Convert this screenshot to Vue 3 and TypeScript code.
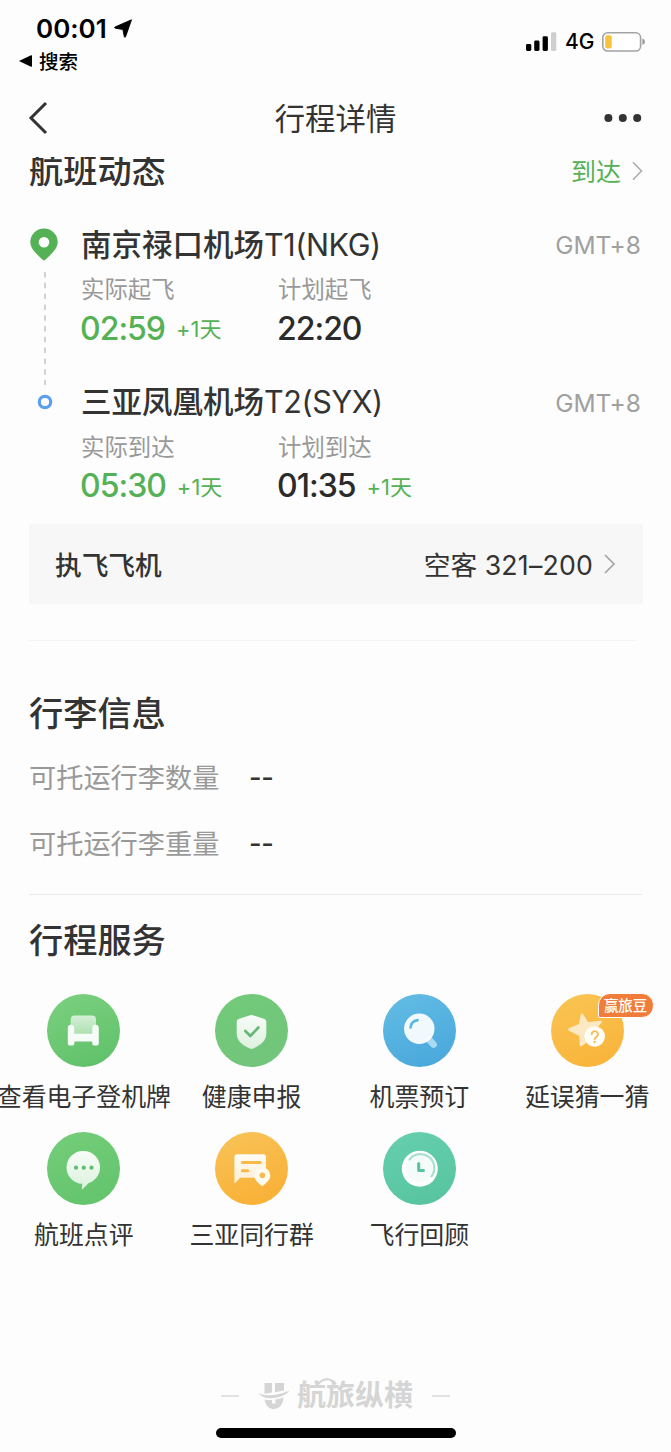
<script setup lang="ts">
interface Stop {
  name: string
  code: string
  actualLabel: string
  actual: string
  actualDay: string
  planLabel: string
  plan: string
  planDay: string
}

interface Service {
  icon: string
  label: string
  from: string
  to: string
  badge?: string
}

const stops: Stop[] = [
  { name: '南京禄口机场', code: 'T1(NKG)', actualLabel: '实际起飞', actual: '02:59', actualDay: '+1天', planLabel: '计划起飞', plan: '22:20', planDay: '' },
  { name: '三亚凤凰机场', code: 'T2(SYX)', actualLabel: '实际到达', actual: '05:30', actualDay: '+1天', planLabel: '计划到达', plan: '01:35', planDay: '+1天' },
]

const luggage: string[] = ['可托运行李数量', '可托运行李重量']

const services: Service[] = [
  { icon: 'seat', label: '查看电子登机牌', from: '#7bd07f', to: '#62c26b' },
  { icon: 'shield', label: '健康申报', from: '#72ca79', to: '#72c57b' },
  { icon: 'search', label: '机票预订', from: '#62bce4', to: '#4ba9dc' },
  { icon: 'star', label: '延误猜一猜', from: '#f9c552', to: '#f9b53c', badge: '赢旅豆' },
  { icon: 'chat', label: '航班点评', from: '#74cd7a', to: '#64c56d' },
  { icon: 'group', label: '三亚同行群', from: '#f8c358', to: '#f9b137' },
  { icon: 'clock', label: '飞行回顾', from: '#66cfae', to: '#58c5a0' },
]
</script>

<template>
  <div class="page">
    <header class="status">
      <div class="status-left">
        <div class="clock-row">
          <span class="time">00:01</span>
          <svg class="loc" width="19" height="19" viewBox="0 0 19 19"><path d="M17.500.8 1 8q-1 .8.300 1.200l7.600 1.300 1.400 7.200q.5 1.400 1.300 0z" fill="#000" stroke="#000" stroke-width=".9" stroke-linejoin="round" /></svg>
        </div>
        <div class="back-app">
          <svg width="13" height="12" viewBox="0 0 13 12"><path d="M0 6 12 .3Q13 0 13 1v10q0 1-1 .7z" fill="#000" /></svg>
          <span>搜索</span>
        </div>
      </div>
      <div class="status-right">
        <svg width="31" height="20" viewBox="0 0 31 20">
          <rect x="0" y="12" width="5.300" height="7" rx="1.400" />
          <rect x="8.200" y="8.500" width="5.300" height="10.500" rx="1.400" />
          <rect x="16.600" y="4.300" width="5.300" height="14.700" rx="1.400" />
          <rect x="25" y="0.300" width="5.300" height="18.700" rx="1.400" fill="#cfcfcf" />
        </svg>
        <span class="net">4G</span>
        <svg width="44" height="20" viewBox="0 0 44 20">
          <rect x=".8" y=".8" width="37.800" height="18.200" rx="4.800" fill="#fff" stroke="#a3a3a3" stroke-width="1.600" />
          <rect x="3.200" y="3.300" width="6.500" height="13.200" rx="2" fill="#f5c43c" />
          <path d="M40.400 6.500q2.600 1 2.600 3.300t-2.600 3.300z" fill="#999" />
        </svg>
      </div>
    </header>

    <nav class="nav">
      <svg width="20" height="34" viewBox="0 0 20 34"><path d="M18 2 3 17l15 15" fill="none" stroke="#333" stroke-width="3" /></svg>
      <h1>行程详情</h1>
      <svg width="38" height="10" viewBox="0 0 38 10" fill="#333"><circle cx="4.400" cy="5" r="4" /><circle cx="18.800" cy="5" r="4" /><circle cx="33.200" cy="5" r="4" /></svg>
    </nav>

    <section class="flight">
      <div class="flight-head">
        <h2>航班动态</h2>
        <div class="state">
          <span>到达</span>
          <svg width="11" height="20" viewBox="0 0 11 20"><path d="M1 1.200 9.500 10 1 18.800" fill="none" stroke="#aaa" stroke-width="1.500" /></svg>
        </div>
      </div>

      <div class="route">
        <div class="track">
          <svg class="pin" width="28" height="33" viewBox="0 0 28 33"><path d="M14 .5a13.600 13.600 0 0 1 13.700 13.600c0 7-7 12.500-12.400 17.700q-1.300 1.200-2.600 0C7.300 26.600.3 21.100.3 14.100A13.600 13.600 0 0 1 14 .5z" fill="#55b155" /><circle cx="14" cy="14.300" r="5.300" fill="#fff" /></svg>
          <svg class="dash" width="2" height="113" viewBox="0 0 2 113"><path d="M1 0v113" stroke="#cbcbcb" stroke-width="1.700" stroke-dasharray="5.500 5.300" /></svg>
          <svg class="ring" width="16" height="16" viewBox="0 0 16 16"><circle cx="8" cy="8" r="5.700" fill="#fff" stroke="#5b9ff0" stroke-width="3.200" /></svg>
        </div>
        <div class="stops">
          <div v-for="stop in stops" :key="stop.code" class="stop">
            <div class="airport">
              <span class="name">{{ stop.name }}<span class="code">{{ stop.code }}</span></span>
              <span class="zone">GMT+8</span>
            </div>
            <div class="times">
              <div class="col">
                <div class="label">{{ stop.actualLabel }}</div>
                <div class="value green"><b>{{ stop.actual }}</b><i>{{ stop.actualDay }}</i></div>
              </div>
              <div class="col">
                <div class="label">{{ stop.planLabel }}</div>
                <div class="value"><b>{{ stop.plan }}</b><i v-if="stop.planDay">{{ stop.planDay }}</i></div>
              </div>
            </div>
          </div>
        </div>
      </div>

      <div class="plane">
        <span class="plane-key">执飞飞机</span>
        <span class="plane-val">空客 <span class="model">321–200</span></span>
        <svg width="12" height="20" viewBox="0 0 12 20"><path d="M1 1 10 10l-9 9" fill="none" stroke="#a5a5a5" stroke-width="1.700" /></svg>
      </div>
      <div class="divider"></div>
    </section>

    <section class="luggage">
      <h2>行李信息</h2>
      <div v-for="row in luggage" :key="row" class="bag-row">
        <span class="bag-key">{{ row }}</span>
        <span class="bag-val">--</span>
      </div>
    </section>

    <section class="services">
      <h2>行程服务</h2>
      <div class="grid">
        <div v-for="s in services" :key="s.icon" class="service">
          <div class="disc">
            <svg width="73" height="73" viewBox="0 0 73 73">
              <defs>
                <linearGradient :id="'bg-' + s.icon" x1="0.1" y1="0" x2="0.5" y2="1">
                  <stop offset="0" :stop-color="s.from" />
                  <stop offset="1" :stop-color="s.to" />
                </linearGradient>
                <linearGradient :id="'fg-' + s.icon" x1="0" y1="0" x2="0" y2="1">
                  <stop offset="0" stop-color="#fff" :stop-opacity="s.icon === 'seat' ? 0.7 : 0.95" />
                  <stop offset="1" stop-color="#fff" :stop-opacity="s.icon === 'seat' ? 0.45 : 0.76" />
                </linearGradient>
              </defs>
              <circle cx="36.500" cy="36.500" r="36.500" :fill="`url(#bg-${s.icon})`" />

              <g v-if="s.icon === 'seat'">
                <path d="M27.500 21.500h17.800q3.700 0 3.700 3.700V31q-3 .5-3 4v5H27v-5q0-3.500-3.300-4v-5.800q0-3.700 3.800-3.700z" fill="url(#fg-seat)" />
                <path d="M24 30.800q3.200 0 3.200 3.400v5.600h18.200v-5.600q0-3.400 3.200-3.400t3.200 3.400v15.300q0 2-2 2h-2.600q-2 0-2-2v-2H27.400v2q0 2-2 2h-2.600q-2 0-2-2V34.200q0-3.400 3.200-3.400z" fill="#fff" fill-opacity=".94" />
              </g>

              <g v-else-if="s.icon === 'shield'">
                <path d="M35.100 21.200q1.400-.7 2.800 0L49.500 25q1.800.6 1.800 2.500v12c0 8-6.500 11.800-13 14.900q-1.800.8-3.600 0c-6.500-3.100-13-6.900-13-14.900v-12q0-1.900 1.800-2.500z" fill="url(#fg-shield)" />
                <path d="m30.300 37 5 5L43.400 33.500" fill="none" stroke="#65b873" stroke-width="2.600" stroke-linecap="round" stroke-linejoin="round" />
              </g>

              <g v-else-if="s.icon === 'search'">
                <path d="M46 45.500 50.500 50.500" stroke="#a9d9f3" stroke-width="6.800" stroke-linecap="round" />
                <circle cx="36.300" cy="34.800" r="15.200" fill="#fff" fill-opacity=".92" />
                <path d="M27.600 33.500q.4-6.500 7-7.400" fill="none" stroke="#5bb7e3" stroke-width="2.600" stroke-linecap="round" />
              </g>

              <g v-else-if="s.icon === 'star'">
                <path d="M31 21l5.500 8.500 13-1.500-8 9.500 3.500 11-8.500-2-6.500 4.500-.5-10-11-5.500 10.500-4.500z" fill="#fde8c4" stroke="#fde8c4" stroke-width="2.600" stroke-linejoin="round" />
                <circle cx="43.700" cy="42.500" r="10.300" fill="#fffdf8" />
                <path d="M40.700 40.300a3.100 3.100 0 1 1 4.700 2.600q-1.700 1-1.700 2.200" fill="none" stroke="#f4bd59" stroke-width="1.900" stroke-linecap="round" />
                <circle cx="43.700" cy="48" r="1.200" fill="#f4bd59" />
              </g>

              <g v-else-if="s.icon === 'chat'">
                <path d="M36.700 19a16.400 16.400 0 0 1 5 32q-2 2-6 6-.8.600-.8-.5l.3-4.700A16.400 16.400 0 0 1 36.700 19z" fill="url(#fg-chat)" />
                <g fill="#63bd70"><circle cx="29" cy="35.700" r="2.100" /><circle cx="36.800" cy="35.700" r="2.100" /><circle cx="44.500" cy="35.700" r="2.100" /></g>
              </g>

              <g v-else-if="s.icon === 'group'">
                <path d="M22 22.300h26q3 0 3 3v20.500H25.200l-4.800 5q-1 1-1-.5v-25q0-3 2.600-3z" fill="url(#fg-group)" />
                <path d="M27.300 30.400h18M27.300 38.700h5.500" stroke="#f7ba4b" stroke-width="3" stroke-linecap="round" />
                <path d="M47.300 35.500a8 8 0 0 1 8 8c0 4.200-3.800 7-6.700 9.700q-1.300 1.100-2.600 0c-2.900-2.700-6.700-5.500-6.700-9.700a8 8 0 0 1 8-8z" fill="#fffaf0" />
                <circle cx="47.300" cy="43.300" r="2.800" fill="#f7ba4b" />
              </g>

              <g v-else>
                <circle cx="36.800" cy="36.700" r="18" fill="#fff" />
                <circle cx="36.800" cy="36.700" r="13.800" fill="#f4fbf9" />
                <path d="M26.500 27.500a13.800 13.800 0 0 1 22 16.800" fill="none" stroke="#a9e0cf" stroke-width="2.200" stroke-linecap="round" />
                <path d="M35.700 31.500v7h4.800" fill="none" stroke="#57c3a0" stroke-width="3" stroke-linecap="round" stroke-linejoin="round" />
              </g>
            </svg>
            <span v-if="s.badge" class="badge">{{ s.badge }}</span>
          </div>
          <div class="service-label">{{ s.label }}</div>
        </div>
      </div>
    </section>

    <footer class="footer">
      <div class="brand">
        <span class="rule"></span>
        <svg class="mark" width="34" height="28" viewBox="0 0 34 28" fill="#d5d5d5">
          <path d="M7.500 1H15v9.500l-7.500 1.200zM18 1h9v7.500L18 10.200z" />
          <path d="M.5 8.500Q1 12 7 13q12 1.500 25.500-4.500Q29 14.500 17 16 3 17.500.5 8.500z" />
          <path d="M7.500 17.500q4 .8 7.500.5v3q1.500 1.500 3.500.3V17.500q4.500-.6 8-2.300-.5 11.300-10 12-8-.7-9-9.700z" />
        </svg>
        <span class="brand-name">航旅纵横
          <svg class="arc" width="20" height="7" viewBox="0 0 20 7"><path d="M1 6Q10-3.500 19 6" fill="none" stroke="#d5d5d5" stroke-width="2" /></svg>
        </span>
        <span class="rule"></span>
      </div>
      <div class="home"></div>
    </footer>
  </div>
</template>

<style>
body {
  background: #fdfdfd;
}
</style>

<style scoped>
.page {
  width: 671px;
  height: 1452px;
  overflow: hidden;
  background: #fdfdfd;
  color: #333;
  font-family: Inter, "Noto Sans CJK SC", sans-serif;
  font-feature-settings: "calt" 0;
}
.page * {
  box-sizing: border-box;
}
svg {
  display: block;
  flex: none;
}
h1,
h2 {
  margin: 0;
}
.status {
  height: 84px;
  display: flex;
  justify-content: space-between;
  color: #000;
}
.status-left {
  padding: 13px 0 0 19px;
}
.clock-row {
  display: flex;
  align-items: center;
  height: 30px;
  padding-left: 17px;
}
.time {
  width: 78px;
  font-size: 26px;
  font-weight: 600;
  line-height: 30px;
  padding-top: 1px;
}
.back-app {
  display: flex;
  align-items: center;
  gap: 7px;
  height: 35px;
  font-size: 19.500px;
  font-weight: 500;
}
.status-right {
  display: flex;
  align-items: center;
  height: 20px;
  margin: 32px 25px 0 0;
}
.net {
  width: 45px;
  padding-left: 8px;
  font-size: 21px;
  font-weight: 500;
  line-height: 20px;
}
.nav {
  display: flex;
  align-items: center;
  justify-content: space-between;
  height: 73px;
  padding: 0 29px 5px 28px;
}
.nav h1 {
  font-size: 30.400px;
  font-weight: 400;
  line-height: 40px;
  padding: 2px 0 0;
  margin-right: -19px;
}
h2 {
  font-size: 34.200px;
  font-weight: 500;
  line-height: 50px;
}
.flight {
  height: 484px;
  padding: 0 28px 0 29px;
}
.flight-head {
  display: flex;
  align-items: flex-start;
  justify-content: space-between;
  height: 29px;
}
.flight-head h2 {
  height: 30px;
  line-height: 27px;
  overflow: hidden;
}
.state {
  display: flex;
  align-items: center;
  gap: 11px;
  height: 27px;
  color: #55b155;
  font-size: 25px;
}
.state span {
  padding-bottom: 2px;
}
.route {
  display: flex;
  padding-top: 39px;
}
.track {
  width: 52px;
  padding: 3px 0 0 1px;
}
.dash {
  margin: 11px 0 0 14px;
}
.ring {
  margin: 9px 0 0 7px;
}
.stops {
  flex: 1;
}
.stop {
  height: 157.500px;
}
.airport {
  display: flex;
  align-items: center;
  justify-content: space-between;
  height: 40px;
}
.name {
  padding-bottom: 5px;
  font-size: 30.500px;
  font-weight: 500;
  white-space: nowrap;
}
.code {
  font-weight: 400;
  letter-spacing: -0.400px;
}
.zone {
  padding-right: 2px;
  color: #a0a0a0;
  font-size: 24.500px;
}
.times {
  display: flex;
}
.col {
  width: 197px;
}
.label {
  height: 50px;
  color: #999;
  font-size: 23.400px;
  line-height: 50px;
}
.value {
  display: flex;
  align-items: center;
  gap: 11px;
  height: 26px;
  color: #2b2b2b;
  white-space: nowrap;
}
.value b {
  margin-left: -1px;
  font-size: 32px;
  font-weight: 500;
  letter-spacing: -1px;
}
.value i {
  color: #55b155;
  font-size: 22px;
  font-style: normal;
  padding-bottom: 2px;
}
.value.green b {
  color: #55b155;
}
.plane {
  display: flex;
  align-items: center;
  width: 614px;
  height: 80px;
  margin-top: -16px;
  padding: 0 27px 0 26px;
  border-radius: 3px;
  background: #f7f7f7;
  font-size: 26.700px;
}
.plane-key {
  padding-bottom: 2px;
  font-weight: 500;
}
.plane-val {
  margin: 0 11px 0 auto;
  padding-bottom: 2px;
}
.model {
  letter-spacing: 0.200px;
}
.divider {
  width: 607px;
  height: 1px;
  margin-top: 36px;
  background: #f4f4f4;
}
.luggage {
  margin: 0 29px;
  height: 254px;
  padding-top: 48px;
  border-bottom: 1px solid #ebebeb;
}
.luggage h2 {
  margin-bottom: 4px;
}
.bag-row {
  display: flex;
  align-items: center;
  height: 66px;
  font-size: 27.200px;
}
.bag-key {
  width: 220px;
  color: #999;
}
.bag-val {
  padding-top: 2px;
  font-weight: 500;
  letter-spacing: -0.300px;
}
.services h2 {
  margin: 21px 0 28px 29px;
}
.grid {
  display: grid;
  grid-template-columns: repeat(4, 167.750px);
}
.service {
  display: flex;
  flex-direction: column;
  align-items: center;
  height: 138px;
}
.disc {
  position: relative;
  height: 73px;
}
.badge {
  position: absolute;
  left: 47px;
  top: -1px;
  width: 56px;
  height: 25px;
  border: 1.500px solid #fff;
  border-radius: 12px 12px 12px 2px;
  background: #f07e3a;
  color: #fff;
  font-size: 14.500px;
  font-weight: 500;
  line-height: 24px;
  text-align: center;
  white-space: nowrap;
}
.service-label {
  margin-top: 11px;
  font-size: 24.900px;
  line-height: 38px;
  white-space: nowrap;
}
.footer {
  padding-top: 108px;
}
.brand {
  display: flex;
  align-items: center;
  height: 36px;
  padding-left: 221px;
}
.rule {
  width: 18px;
  height: 2px;
  background: #e2e2e2;
}
.mark {
  margin: 0 6px 0 18px;
}
.brand-name {
  position: relative;
  width: 117px;
  margin-right: 18px;
  color: #d5d5d5;
  font-size: 29px;
  font-weight: 700;
  line-height: 36px;
  white-space: nowrap;
}
.arc {
  position: absolute;
  left: 20px;
  top: 0;
}
.home {
  width: 240px;
  height: 10px;
  margin: 14px 0 0 216px;
  border-radius: 5px;
  background: #000;
}
</style>
